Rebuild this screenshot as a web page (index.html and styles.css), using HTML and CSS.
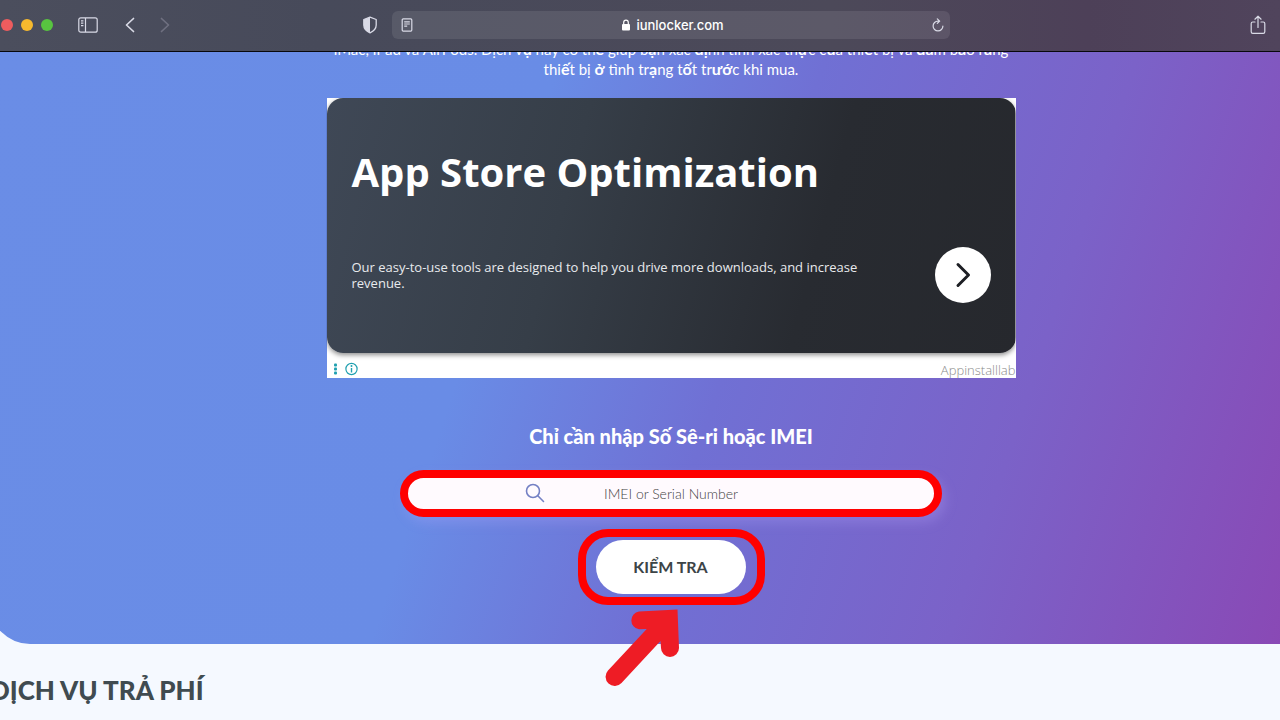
FILE: index.html
```html
<!DOCTYPE html>
<html lang="vi">
<head>
<meta charset="utf-8">
<meta name="viewport" content="width=device-width, initial-scale=1">
<title>iunlocker.com</title>
<link rel="stylesheet" href="styles.css">
</head>
<body>
<header class="toolbar">
  <div class="toolbar-start">
    <div class="lights">
      <span class="light light-close"></span>
      <span class="light light-min"></span>
      <span class="light light-max"></span>
    </div>
    <button class="tool" type="button" aria-label="Sidebar">
      <svg width="20" height="16" viewBox="0 0 20 16" fill="none" stroke="currentColor" stroke-width="1.2"><rect x="0.8" y="0.8" width="18.4" height="14.4" rx="2"/><path d="M7.5 1v14M3 3.8h2.4M3 6.2h2.4M3 8.6h2.4"/></svg>
    </button>
    <div class="nav">
      <button class="tool" type="button" aria-label="Back">
        <svg width="10" height="16" viewBox="0 0 10 16" fill="none" stroke="currentColor" stroke-width="1.7" stroke-linecap="round" stroke-linejoin="round"><path d="M8.5 1.5 1.5 8l7 6.500"/></svg>
      </button>
      <button class="tool tool-off" type="button" aria-label="Forward">
        <svg width="10" height="16" viewBox="0 0 10 16" fill="none" stroke="currentColor" stroke-width="1.7" stroke-linecap="round" stroke-linejoin="round"><path d="M1.500 1.500 8.500 8l-7 6.500"/></svg>
      </button>
    </div>
    <button class="tool tool-shield" type="button" aria-label="Privacy">
      <svg width="16" height="18" viewBox="0 0 16 18"><path d="M8 1.200 14.200 3.500V9c0 3.800-2.600 6.200-6.200 7.800C4.400 15.200 1.800 12.800 1.800 9V3.500z" fill="none" stroke="currentColor" stroke-width="1.300" stroke-linejoin="round"/><path d="M8 1.200V16.800C4.400 15.200 1.800 12.800 1.800 9V3.500z" fill="currentColor"/></svg>
    </button>
  </div>
  <div class="address">
    <button class="tool" type="button" aria-label="Reader">
      <svg width="12" height="14" viewBox="0 0 12 14" fill="none" stroke="currentColor" stroke-width="1.200"><rect x="1.200" y="0.900" width="9.600" height="12.200" rx="1"/><path d="M3.200 3.800h5.600M3.200 6h5.600M3.200 8.200h3"/></svg>
    </button>
    <span class="site">
      <svg width="10" height="12" viewBox="0 0 10 12"><rect x="1" y="5" width="8" height="6.500" rx="1" fill="currentColor"/><path d="M2.700 5.500V3.400a2.300 2.300 0 0 1 4.600 0v2.100" fill="none" stroke="currentColor" stroke-width="1.200"/></svg>
      iunlocker.com
    </span>
    <button class="tool" type="button" aria-label="Reload">
      <svg width="12" height="14" viewBox="0 0 12 14" fill="none" stroke="currentColor" stroke-width="1.200" stroke-linecap="round" stroke-linejoin="round"><path d="M10.900 8A4.900 4.900 0 1 1 6 3.100h1.500M5.300.9l2.400 2.200-2.400 2.300"/></svg>
    </button>
  </div>
  <div class="toolbar-end">
    <button class="tool" type="button" aria-label="Share">
      <svg width="16" height="20" viewBox="0 0 16 20" fill="none" stroke="currentColor" stroke-width="1.200" stroke-linecap="round" stroke-linejoin="round"><path d="M5 7H2.800C1.800 7 1.200 7.500 1.200 8.500v8.200c0 1 .6 1.600 1.600 1.600h10.400c1 0 1.600-.6 1.600-1.600V8.500c0-1-.6-1.500-1.600-1.500H11M8 12.500V1.200M4.900 4.200 8 1.200l3.100 3"/></svg>
    </button>
  </div>
</header>

<main class="page">
  <section class="hero">
    <p class="intro">iMac, iPad và AirPods. Dịch v<b>ụ</b> này có th<b>ể</b> giúp b<b>ạ</b>n xác <b>đị</b>nh tính xác th<b>ự</b>c c<b>ủ</b>a thi<b>ế</b>t bị và <b>đả</b>m b<b>ả</b>o r<b>ằ</b>ng thi<b>ế</b>t bị <b>ở</b> tình tr<b>ạ</b>ng t<b>ố</b>t tr<b>ướ</b>c khi mua.</p>

    <aside class="ad">
      <div class="ad-card">
        <h2 class="ad-title">App Store Optimization</h2>
        <div class="ad-row">
          <p class="ad-text">Our easy-to-use tools are designed to help you drive more downloads, and increase revenue.</p>
          <button class="ad-go" type="button" aria-label="Open">
            <svg width="16" height="26" viewBox="0 0 16 26" fill="none" stroke="currentColor" stroke-width="3" stroke-linecap="round" stroke-linejoin="round"><path d="M3 2.500 13.500 13 3 23.500"/></svg>
          </button>
        </div>
      </div>
      <div class="ad-foot">
        <svg width="26" height="14" viewBox="0 0 26 14"><g fill="#20a0b0"><rect x="1" y="1.500" width="3" height="3" rx="1"/><rect x="1" y="5.500" width="3" height="3" rx="1"/><rect x="1" y="9.500" width="3" height="3" rx="1"/><rect x="17.800" y="6" width="1.400" height="4.500"/><circle cx="18.500" cy="4" r="1"/></g><circle cx="18.500" cy="7" r="5.600" fill="none" stroke="#20a0b0" stroke-width="1.200"/></svg>
        <span class="ad-brand">Appinstalllab</span>
      </div>
    </aside>

    <form class="check">
      <label class="check-label" for="imei">Chỉ cần nhập Số Sê-ri hoặc IMEI</label>
      <div class="field">
        <svg class="field-icon" width="20" height="20" viewBox="0 0 20 20" fill="none" stroke="#7480c4" stroke-width="1.600" stroke-linecap="round"><circle cx="8" cy="8" r="6.500"/><path d="M12.800 12.800 18.500 18.500"/></svg>
        <input class="field-input" id="imei" type="text" placeholder="IMEI or Serial Number">
      </div>
      <div class="submit">
        <button class="submit-btn" type="button">KIỂM TRA</button>
        <svg class="arrow" width="78" height="80" viewBox="0 0 78 80" aria-hidden="true"><path fill="#ee1c25" d="M35 3.500 73.500 1.500 75 40A9 9 0 0 1 57 40L56.500 33 17.500 75A9 9 0 0 1 4 62.500L42.700 21 35 21.300A9 9 0 0 1 35 3.500Z"/></svg>
      </div>
    </form>
  </section>

  <section class="paid">
    <h2 class="paid-title">DỊCH VỤ TRẢ PHÍ</h2>
  </section>
</main>
</body>
</html>
```
FILE: styles.css
```css
* {
  box-sizing: border-box;
}

body {
  margin: 0;
  height: 100vh;
  overflow: hidden;
  display: flex;
  flex-direction: column;
  background: #f5f9ff;
  font-family: Lato, "Noto Sans", sans-serif;
}

h2,
p {
  margin: 0;
}

button {
  font-family: inherit;
  border: 0;
  cursor: pointer;
}

svg {
  display: block;
}

/* Browser toolbar */
.toolbar {
  position: relative;
  z-index: 2;
  flex: none;
  height: 52px;
  display: grid;
  grid-template-columns: 392fr 558fr 330fr;
  align-items: center;
  padding-bottom: 1px;
  border-bottom: 1px solid #08080c;
  background: linear-gradient(90deg, #4b4e5d 0%, #474a5a 25%, #4c4959 65%, #4d4058 85%, #50445c 100%);
  color: #d9dae6;
}

.toolbar-start {
  display: flex;
  align-items: center;
}

.lights {
  display: flex;
  gap: 8px;
  padding-left: 1px;
  margin-right: 25px;
}

.light {
  width: 12px;
  height: 12px;
  border-radius: 50%;
}

.light-close {
  background: #ee5c5e;
}

.light-min {
  background: #f6b92e;
}

.light-max {
  background: #58c440;
}

.tool {
  padding: 0;
  background: none;
  color: inherit;
}

.tool-off {
  color: #6f7080;
}

.nav {
  display: flex;
  gap: 25px;
  margin-left: 27px;
}

.tool-shield {
  margin-left: auto;
  margin-right: 14px;
}

.address {
  height: 28px;
  display: flex;
  align-items: center;
  justify-content: space-between;
  padding: 0 6px 0 9px;
  border-radius: 6px;
  background: rgba(255, 255, 255, 0.09);
}

.site {
  display: flex;
  align-items: center;
  gap: 5px;
  color: #fff;
  font: 500 13px/16px Inter, sans-serif;
}

.toolbar-end {
  display: flex;
  justify-content: flex-end;
  padding-right: 14px;
}

/* The page is wider than the window and scrolled, so its edges are cut off */
.page {
  flex: 1;
  margin: -13px -72px 0 -10px;
}

.hero {
  display: flex;
  flex-direction: column;
  align-items: center;
  padding-bottom: 39px;
  border-radius: 0 0 0 40px;
  background: linear-gradient(108deg, #6a8de6 0%, #698ce6 37%, #7070d4 54%, #7b62c8 74%, #8b46b3 98%);
}

.intro {
  max-width: 700px;
  color: #fff;
  font-size: 15px;
  line-height: 20px;
  text-align: center;
}

.intro b {
  font-size: 16px;
  font-weight: 700;
}

.ad {
  width: 689px;
  margin-top: 19px;
  background: #fff;
}

.ad-card {
  padding: 44px 25px 50px;
  border-radius: 16px;
  background: linear-gradient(105deg, #3f4856 0%, #363e48 35%, #282b31 70%, #26282d 100%);
  box-shadow: 0 2px 5px rgba(0, 0, 0, 0.45);
  clip-path: inset(0 0 -12px 0);
  color: #fff;
}

.ad-title {
  font: 700 40px/60px "Open Sans", sans-serif;
}

.ad-row {
  display: flex;
  align-items: center;
  justify-content: space-between;
  margin-top: 45px;
}

.ad-text {
  max-width: 530px;
  color: #e8eaed;
  font: 500 13px/16px "Open Sans", sans-serif;
}

.ad-go {
  display: grid;
  place-items: center;
  width: 56px;
  height: 56px;
  padding: 0;
  border-radius: 50%;
  background: #fff;
  color: #1d1f24;
}

.ad-foot {
  display: flex;
  align-items: flex-end;
  justify-content: space-between;
  height: 25px;
  padding-left: 6px;
}

.ad-foot svg {
  margin-bottom: 2px;
}

.ad-brand {
  color: #8a8a8a;
  font: 300 13px/16px "Open Sans", sans-serif;
}

.check {
  display: flex;
  flex-direction: column;
  align-items: center;
  margin-top: 46px;
}

.check-label {
  color: #fff;
  font-size: 20px;
  font-weight: 900;
  line-height: 24px;
}

/* Red outlines mark the controls to use */
.field {
  position: relative;
  width: 542px;
  margin-top: 22px;
  border: 8px solid #f00;
  border-radius: 24px;
  background: #fffafe;
  box-shadow: 4px 6px 12px rgba(190, 170, 255, 0.25);
}

.field-icon {
  position: absolute;
  left: 117px;
  top: 5px;
}

.field-input {
  display: block;
  width: 100%;
  height: 31px;
  padding: 0;
  border: 0;
  border-radius: 16px;
  background: transparent;
  color: #444;
  font: 300 14px/20px Lato, sans-serif;
  text-align: center;
  outline: 0;
}

.field-input::placeholder {
  color: #444;
  opacity: 1;
}

.submit {
  position: relative;
  margin-top: 12px;
  padding: 3px 11px 3px 10px;
  border: 8px solid #f00;
  border-radius: 30px;
}

.submit-btn {
  display: block;
  width: 150px;
  height: 54px;
  padding: 0 0 2px;
  border-radius: 27px;
  background: #fff;
  color: #3c4447;
  font-size: 16px;
  font-weight: 700;
}

.arrow {
  position: absolute;
  left: 18px;
  top: 71px;
}

.paid {
  padding-top: 30px;
}

.paid-title {
  color: #404b50;
  font-size: 26px;
  font-weight: 900;
  line-height: 32px;
}
```
